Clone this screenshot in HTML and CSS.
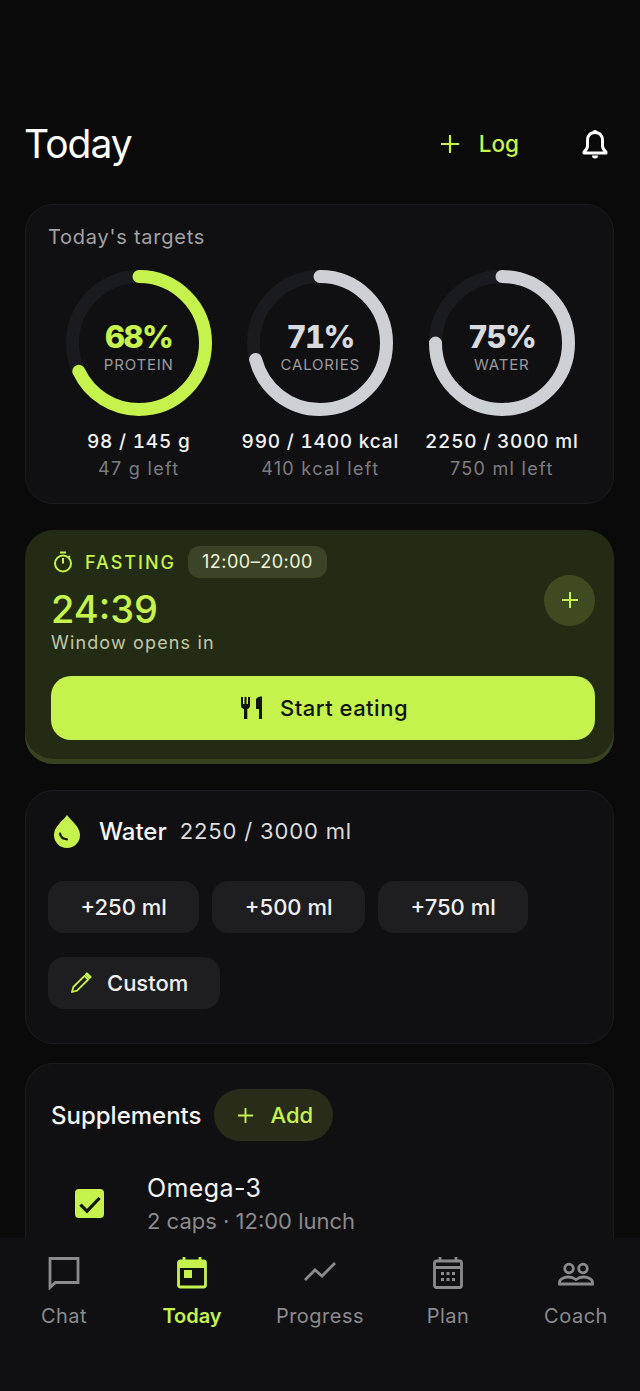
FILE: index.html
```html
<!DOCTYPE html>
<html lang="en">
<head>
<meta charset="utf-8">
<title>Today</title>
<link rel="stylesheet" href="styles.css">
</head>
<body>
<main class="content">
  <header class="top">
    <h1 class="title">Today</h1>
    <div class="log"><svg class="log-plus" viewBox="0 0 20 20"><path d="M10 1v18M1 10h18"/></svg><span>Log</span></div>
    <svg class="bell" viewBox="0 0 28 32"><path d="M14 4.500c-5 0-7.500 3.600-7.500 8v5.500c0 2-1.200 3.800-3.500 6v1h22v-1c-2.300-2.200-3.500-4-3.500-6v-5.500c0-4.400-2.500-8-7.500-8z"/><path class="fill" d="M11.500 4.500a2.500 2.500 0 0 1 5 0zM11 27.500h6a3 3 0 0 1-6 0z"/></svg>
  </header>

  <section class="card targets">
    <h2 class="targets-title">Today's targets</h2>
    <div class="rings">
      <div class="ring-col">
        <div class="ring">
          <svg class="ring-svg" viewBox="0 0 146 146"><circle class="track" cx="73" cy="73" r="66.500"/><circle class="arc lime" cx="73" cy="73" r="66.500" pathLength="100" stroke-dasharray="68 100"/></svg>
          <div class="ring-text"><div class="pct lime-text">68%</div><div class="ring-label">PROTEIN</div></div>
        </div>
        <div class="amount">98 / 145 g</div>
        <div class="left">47 g left</div>
      </div>
      <div class="ring-col">
        <div class="ring">
          <svg class="ring-svg" viewBox="0 0 146 146"><circle class="track" cx="73" cy="73" r="66.500"/><circle class="arc grey" cx="73" cy="73" r="66.500" pathLength="100" stroke-dasharray="71 100"/></svg>
          <div class="ring-text"><div class="pct">71%</div><div class="ring-label">CALORIES</div></div>
        </div>
        <div class="amount">990 / 1400 kcal</div>
        <div class="left">410 kcal left</div>
      </div>
      <div class="ring-col">
        <div class="ring">
          <svg class="ring-svg" viewBox="0 0 146 146"><circle class="track" cx="73" cy="73" r="66.500"/><circle class="arc grey" cx="73" cy="73" r="66.500" pathLength="100" stroke-dasharray="75 100"/></svg>
          <div class="ring-text"><div class="pct">75%</div><div class="ring-label">WATER</div></div>
        </div>
        <div class="amount">2250 / 3000 ml</div>
        <div class="left">750 ml left</div>
      </div>
    </div>
  </section>

  <section class="fasting">
    <div class="fast-main">
      <div class="fast-info">
        <div class="fast-head">
          <svg class="timer" viewBox="0 0 24 24"><path d="M9 2.500h6M12 8v5.500M19 6l-1.500 1.500"/><circle cx="12" cy="13.500" r="8"/></svg>
          <span class="fast-label">FASTING</span>
          <span class="fast-pill">12:00–20:00</span>
        </div>
        <div class="fast-time">24:39</div>
        <div class="fast-sub">Window opens in</div>
      </div>
      <div class="fast-add"><svg class="fast-plus" viewBox="0 0 18 18"><path d="M9 1v16M1 9h16"/></svg></div>
    </div>
    <button class="start">
      <svg class="cutlery" viewBox="0 0 24 24"><path d="M1 1h2v7h1.500V1h2v7H8V1h2v8.500c0 2-1.200 3.200-2.700 3.500v10H4v-10C2.300 12.700 1 11.500 1 9.500zM16 13V4c0-2 2.500-3.500 6-3.500V23h-3v-10z"/></svg>
      <span>Start eating</span>
    </button>
  </section>

  <section class="card water">
    <div class="water-head">
      <svg class="drop" viewBox="0 0 28 34"><path class="drop-body" d="M14 1C9 7.500 1 13 1 21a13 13 0 0 0 26 0C27 13 19 7.500 14 1z"/><path class="drop-shine" d="M7 19.500c.5 3.500 3 5.500 7 5.800"/></svg>
      <span class="water-title">Water</span>
      <span class="water-val">2250 / 3000 ml</span>
    </div>
    <div class="chips">
      <button class="chip">+250 ml</button>
      <button class="chip">+500 ml</button>
      <button class="chip">+750 ml</button>
      <button class="chip custom">
        <svg class="pencil" viewBox="0 0 22 22"><path d="M2 20l1.300-5L14.500 3.800l3.700 3.700L7 18.700z"/><path class="pencil-tip" d="M15.800 2.500l1.200-1.200 3.700 3.700-1.200 1.200z"/></svg>
        <span>Custom</span>
      </button>
    </div>
  </section>

  <section class="card supplements">
    <div class="sup-head">
      <h2 class="sup-title">Supplements</h2>
      <button class="add"><svg class="add-plus" viewBox="0 0 16 16"><path d="M8 0v16M0 8h16"/></svg><span>Add</span></button>
    </div>
    <div class="sup-row">
      <div class="check"><svg class="check-mark" viewBox="0 0 20 20"><path d="M2 10.500l5.500 5.500L18 5"/></svg></div>
      <div>
        <div class="sup-name">Omega-3</div>
        <div class="sup-dose">2 caps · 12:00 lunch</div>
      </div>
    </div>
  </section>
</main>

<nav class="tabs">
  <div class="tab">
    <svg class="tab-icon" viewBox="0 0 34 34"><path d="M3 2.500h28v24H8.500L3 31.500z"/></svg>
    <span>Chat</span>
  </div>
  <div class="tab active">
    <svg class="tab-icon" viewBox="0 0 34 34"><path d="M9 1v5M25 1v5"/><rect x="3.500" y="5" width="27" height="26" rx="2"/><path class="bar" d="M3 5h28v7H3z"/><path class="bar" d="M9 14h8v8H9z"/></svg>
    <span>Today</span>
  </div>
  <div class="tab">
    <svg class="tab-icon" viewBox="0 0 34 34"><path d="M2 24l10-10 7 6L32 7"/></svg>
    <span>Progress</span>
  </div>
  <div class="tab">
    <svg class="tab-icon" viewBox="0 0 34 34"><path d="M9 1v5M25 1v5M3.500 11.500h27"/><rect x="3.500" y="5" width="27" height="26.500" rx="2"/><path class="dots" d="M10 16h3v3h-3zM15.500 16h3v3h-3zM21 16h3v3h-3zM10 22h3v3h-3zM15.500 22h3v3h-3zM21 22h3v3h-3z"/></svg>
    <span>Plan</span>
  </div>
  <div class="tab">
    <svg class="tab-icon coach" viewBox="0 0 36 34"><circle cx="11" cy="12.500" r="4.300"/><circle cx="25" cy="12.500" r="4.300"/><path d="M1.500 28v-1.500c0-3 4-5.500 9-5.500 3 0 5.500 1 7.500 2.500 2-1.500 4.500-2.500 7.500-2.500 5 0 9 2.500 9 5.500V28z"/></svg>
    <span>Coach</span>
  </div>
</nav>
</body>
</html>
```

FILE: styles.css
```css
* { box-sizing: border-box; margin: 0; padding: 0; }

html, body { height: 1391px; overflow: hidden; }

body {
  display: flex;
  flex-direction: column;
  background: #0a0a0b;
  color: #fff;
  font-family: Inter, "Liberation Sans", sans-serif;
}

button { font-family: inherit; border: 0; }

svg { display: block; flex: none; }

.content {
  flex: 1;
  min-height: 0;
  overflow: hidden;
  padding: 120px 26px 0 25px;
}

.top {
  display: flex;
  align-items: center;
  height: 47px;
  margin-bottom: 37px;
}

.title {
  flex: 1;
  margin-left: -1px;
  font-size: 39px;
  font-weight: 400;
  letter-spacing: -1px;
}

.log {
  display: flex;
  align-items: center;
  gap: 19px;
  margin-right: 62px;
  color: #c6f24e;
  font-size: 22.5px;
  font-weight: 500;
}

.log-plus { width: 20px; height: 20px; }
.log-plus path { stroke: #c6f24e; stroke-width: 2.200; fill: none; }

.bell { width: 28px; height: 32px; margin-right: 5px; }
.bell path { fill: none; stroke: #fff; stroke-width: 3; stroke-linejoin: round; }
.bell .fill { fill: #fff; stroke: none; }

.card {
  background: #101012;
  border: 1px solid #1c1c1f;
  border-radius: 28px;
}

.targets {
  height: 300px;
  padding: 20px 20px 0 22px;
  margin-bottom: 26px;
}

.targets-title {
  font-size: 20px;
  font-weight: 400;
  color: #a2a2a5;
  letter-spacing: 0.75px;
  line-height: 24px;
  margin-bottom: 21px;
}

.rings { display: flex; }

.ring-col {
  display: flex;
  flex-direction: column;
  align-items: center;
  flex: none;
  width: 181.5px;
}

.ring { position: relative; width: 146px; height: 146px; margin-bottom: 12px; }

.ring-svg { width: 146px; height: 146px; transform: rotate(-90deg); }

.track { fill: none; stroke: #1a1b1e; stroke-width: 13; }

.arc { fill: none; stroke-width: 13; stroke-linecap: round; }
.arc.lime { stroke: #c6f24e; }
.arc.grey { stroke: #cdd0d4; }

.ring-text {
  position: absolute;
  inset: 0;
  padding-top: 6px;
  display: flex;
  flex-direction: column;
  align-items: center;
  justify-content: center;
}

.pct {
  font-size: 31px;
  font-weight: 800;
  font-variant-numeric: tabular-nums;
  line-height: 38px;
  color: #d8dade;
  letter-spacing: -1.5px;
}

.lime-text { color: #c6f24e; }

.ring-label {
  font-size: 15px;
  color: #9a9a9e;
  letter-spacing: 0.8px;
  line-height: 18px;
}

.amount {
  font-size: 19px;
  font-weight: 500;
  font-variant-numeric: tabular-nums;
  letter-spacing: 0.8px;
  line-height: 28px;
  white-space: nowrap;
  color: #f2f2f2;
}

.left {
  margin-top: 1px;
  font-size: 18px;
  color: #7d7d80;
  letter-spacing: 1.300px;
  line-height: 24px;
  white-space: nowrap;
}

.fasting {
  height: 234px;
  padding: 10px 19px 0 26px;
  margin-bottom: 26px;
  background: #232b15;
  border-radius: 28px;
  box-shadow: inset 0 -5px 0 #37421f;
}

.fast-main { display: flex; align-items: center; height: 120px; margin-bottom: 16px; }

.fast-info { flex: 1; }

.fast-head { display: flex; align-items: center; height: 32px; }

.timer { width: 24px; height: 24px; margin-right: 10px; }
.timer path, .timer circle { fill: none; stroke: #c6f24e; stroke-width: 2; }

.fast-label {
  color: #c6f24e;
  font-size: 18px;
  font-weight: 500;
  letter-spacing: 2px;
  margin-right: 12px;
}

.fast-pill {
  height: 32px;
  padding: 0 14px;
  border-radius: 12px;
  background: #3c4428;
  color: #eef3d8;
  font-size: 18px;
  line-height: 32px;
  letter-spacing: 0.5px;
}

.fast-time {
  color: #c6f24e;
  font-size: 38px;
  font-weight: 500;
  line-height: 46px;
  margin-top: 8px;
}

.fast-sub {
  color: #c2c9a8;
  font-size: 18px;
  letter-spacing: 1.15px;
  line-height: 22px;
}

.fast-add {
  display: flex;
  align-items: center;
  justify-content: center;
  width: 51px;
  height: 51px;
  border-radius: 50%;
  background: #3e4a20;
}

.fast-plus { width: 18px; height: 18px; }
.fast-plus path { stroke: #c6f24e; stroke-width: 2; fill: none; }

.start {
  display: flex;
  align-items: center;
  justify-content: center;
  gap: 16px;
  width: 100%;
  height: 64px;
  padding-left: 2px;
  border-radius: 20px;
  background: #c6f24e;
  color: #10140a;
  font-size: 22px;
  font-weight: 550;
  letter-spacing: 0.5px;
}

.cutlery { width: 24px; height: 24px; fill: #10140a; }

.water {
  height: 254px;
  padding: 22px 20px 0 22px;
  margin-bottom: 19px;
}

.water-head { display: flex; align-items: center; height: 36px; margin-bottom: 32px; padding-left: 5px; }

.drop { width: 28px; height: 34px; margin-right: 18px; }
.drop-body { fill: #c6f24e; }
.drop-shine { fill: none; stroke: #1a1c10; stroke-width: 2.200; stroke-linecap: round; }

.water-title { font-size: 24px; font-weight: 450; color: #f4f4f4; margin-right: 13px; }

.water-val { font-size: 22px; color: #dcdcdc; letter-spacing: 0.85px; }

.chips { display: flex; flex-wrap: wrap; gap: 24px 13px; }

.chip {
  display: flex;
  align-items: center;
  justify-content: center;
  height: 52px;
  padding: 0 32.5px;
  border-radius: 16px;
  background: #1e1e21;
  color: #f0f0f0;
  font-size: 22px;
  font-weight: 450;
}

.custom { justify-content: flex-start; padding: 0 32px 0 22px; gap: 15px; }

.pencil { width: 22px; height: 22px; }
.pencil path { fill: none; stroke: #c6f24e; stroke-width: 1.800; stroke-linejoin: round; }
.pencil .pencil-tip { fill: #c6f24e; }

.supplements {
  height: 240px;
  padding: 25px 20px 0 25px;
}

.sup-head { display: flex; align-items: center; gap: 12px; height: 52px; margin-bottom: 31px; }

.sup-title { font-size: 24px; font-weight: 450; color: #f4f4f4; }

.add {
  display: flex;
  align-items: center;
  gap: 18px;
  width: 119px;
  height: 52px;
  padding-left: 24px;
  border-radius: 26px;
  background: #282c18;
  color: #c6f24e;
  font-size: 22px;
  font-weight: 500;
}

.add-plus { width: 15px; height: 15px; }
.add-plus path { stroke: #c6f24e; stroke-width: 2; fill: none; }

.sup-row { display: flex; align-items: center; }

.check {
  display: flex;
  align-items: center;
  justify-content: center;
  width: 29px;
  height: 29px;
  margin: -3px 43px 0 24px;
  border-radius: 4px;
  background: #c6f24e;
}

.check-mark { width: 24px; height: 24px; }
.check-mark path { fill: none; stroke: #14160c; stroke-width: 2.600; }

.sup-name { font-size: 25px; color: #f4f4f4; line-height: 32px; letter-spacing: 0.4px; }

.sup-dose { font-size: 22px; color: #8a8a8d; line-height: 34px; }

.tabs {
  display: grid;
  grid-template-columns: repeat(5, 128px);
  flex: none;
  height: 153px;
  background: #101012;
}

.tab {
  display: flex;
  flex-direction: column;
  align-items: center;
  padding-top: 18px;
  color: #8b8b8e;
  font-size: 20px;
  letter-spacing: 0.5px;
}

.tab span { margin-top: 13px; line-height: 26px; }

.tab-icon { width: 34px; height: 34px; }
.tab-icon path, .tab-icon rect, .tab-icon circle { fill: none; stroke: #8b8b8e; stroke-width: 2.800; }
.tab-icon .dots { fill: #8b8b8e; stroke: none; }
.coach { width: 36px; }

.active { color: #c6f24e; font-weight: 600; letter-spacing: 0; }
.active .tab-icon path, .active .tab-icon rect { stroke: #c6f24e; }
.active .tab-icon .bar { fill: #c6f24e; stroke: none; }
```
